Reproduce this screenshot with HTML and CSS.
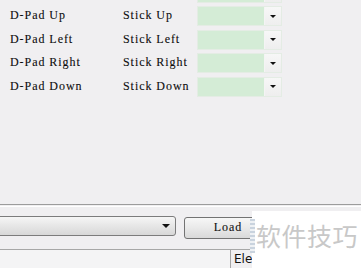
FILE: index.html
```html
<!DOCTYPE html>
<html>
<head>
<meta charset="utf-8">
<link rel="stylesheet" href="styles.css">
</head>
<body>
<div class="page">
  <div class="mapping">
    <div class="row top-row">
      <span class="lbl"></span><span class="lbl"></span>
      <div class="combo"><span class="fill"></span><span class="btn"><i class="arrow"></i></span></div>
    </div>
    <div class="row">
      <span class="lbl">D-Pad Up</span><span class="lbl">Stick Up</span>
      <div class="combo"><span class="fill"></span><span class="btn"><i class="arrow"></i></span></div>
    </div>
    <div class="row">
      <span class="lbl">D-Pad Left</span><span class="lbl">Stick Left</span>
      <div class="combo"><span class="fill"></span><span class="btn"><i class="arrow"></i></span></div>
    </div>
    <div class="row">
      <span class="lbl">D-Pad Right</span><span class="lbl">Stick Right</span>
      <div class="combo"><span class="fill"></span><span class="btn"><i class="arrow"></i></span></div>
    </div>
    <div class="row">
      <span class="lbl">D-Pad Down</span><span class="lbl">Stick Down</span>
      <div class="combo"><span class="fill"></span><span class="btn"><i class="arrow"></i></span></div>
    </div>
  </div>
  <div class="sep"></div>
  <div class="loadbar">
    <div class="profile"><i class="arrow"></i></div>
    <div class="loadbtn">Load</div>
  </div>
  <div class="table">
    <div class="cell first"></div>
    <div class="cell">Elev</div>
  </div>
</div>
<div class="watermark">
  <span class="wm-icon"></span>
  <span class="wm-text">软件技巧</span>
</div>
</body>
</html>
```

FILE: styles.css
```css
html, body {
  margin: 0;
  padding: 0;
}
body {
  width: 361px;
  height: 268px;
  overflow: hidden;
  background: #f0eff1;
  position: relative;
  font-family: "Liberation Serif", serif;
}
.page {
  display: flex;
  flex-direction: column;
  height: 268px;
}
.mapping {
  display: flex;
  flex-direction: column;
  gap: 3.5px;
  margin-top: -17.5px;
}
.row {
  display: grid;
  grid-template-columns: 113px 74px 85px;
  padding-left: 10px;
  height: 20px;
  align-items: center;
}
.lbl {
  font-size: 12px;
  letter-spacing: 0.95px;
  color: #0c0c0c;
  white-space: nowrap;
  line-height: 18px;
  padding-bottom: 2px;
  -webkit-text-stroke: 0.1px #0c0c0c;
}
.combo {
  display: flex;
  height: 20px;
  box-sizing: border-box;
  border: 1px solid #e4ece4;
  background: #fff;
}
.combo .fill {
  flex: 1;
  background: #d4ecd6;
}
.combo .btn {
  width: 16px;
  display: flex;
  align-items: center;
  justify-content: center;
  background: linear-gradient(#f7f7f7, #eeeeee);
  border-left: 1px solid #f4f4f4;
}
.arrow {
  width: 0;
  height: 0;
  border-left: 3px solid transparent;
  border-right: 3px solid transparent;
  border-top: 3px solid #111;
}
.sep {
  margin-top: auto;
  height: 1px;
  border-top: 1px solid #9c9c9c;
  border-bottom: 1px solid #ffffff;
  margin-bottom: 9px;
}
.loadbar {
  display: flex;
  align-items: flex-start;
  gap: 8px;
  height: 33px;
}
.profile {
  margin-left: -10px;
  width: 186px;
  height: 20px;
  box-sizing: border-box;
  border: 1px solid #7c7c7c;
  border-radius: 3px;
  background: linear-gradient(#f6f6f6, #e6e6e6 50%, #d8d8d8);
  display: flex;
  align-items: center;
  justify-content: flex-end;
  padding-right: 5px;
}
.profile .arrow {
  border-left-width: 4px;
  border-right-width: 4px;
  border-top-width: 4px;
}
.loadbtn {
  margin-top: 1px;
  width: 86px;
  height: 22px;
  box-sizing: border-box;
  border: 1px solid #737373;
  border-radius: 3px;
  background: linear-gradient(#f7f7f7, #e9e9e9 50%, #d9d9d9);
  font-size: 12px;
  letter-spacing: 0.95px;
  -webkit-text-stroke: 0.1px #111;
  color: #111;
  display: flex;
  align-items: center;
  justify-content: center;
  padding-left: 2px;
  padding-bottom: 1px;
}
.table {
  display: flex;
  border-top: 1px solid #a7a7a7;
  height: 18px;
}
.cell {
  font-family: "DejaVu Sans", sans-serif;
  font-size: 12px;
  color: #111;
  padding-left: 3px;
  line-height: 19px;
  background: #f0eff1;
}
.cell.first {
  width: 230px;
  border-right: 1px solid #a7a7a7;
  background: #f4f4f5;
  padding: 0;
}
.watermark {
  position: absolute;
  left: 252px;
  top: 211px;
  width: 109px;
  height: 57px;
  background: #ffffff;
  display: flex;
  align-items: flex-start;
  padding-top: 12px;
  box-sizing: border-box;
}
.wm-icon {
  width: 5px;
  height: 34px;
  margin-left: -2px;
  margin-top: -4px;
  background: repeating-linear-gradient(#c9d3de 0 2px, #eef1f4 2px 4px);
}
.wm-text {
  font-family: "Noto Sans CJK SC", sans-serif;
  font-size: 25px;
  color: #c8c8c8;
  margin-left: 1px;
  letter-spacing: 0.5px;
  line-height: 1;
}
```
